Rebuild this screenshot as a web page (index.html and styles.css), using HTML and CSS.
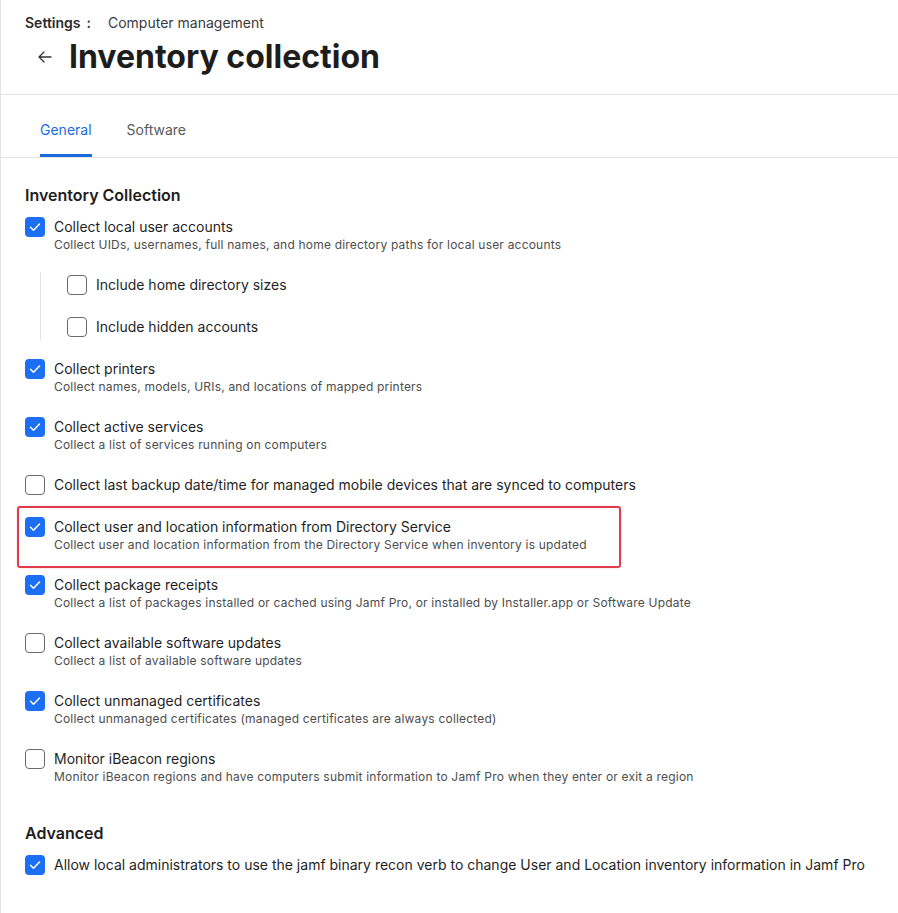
FILE: index.html
```html
<!DOCTYPE html>
<html lang="en">

<head>
  <meta charset="UTF-8">
  <meta name="viewport" content="width=device-width, initial-scale=1.0">
  <title>Inventory collection</title>
  <link rel="stylesheet" href="styles.css">
</head>

<body>
  <div class="page">
    <header class="page-header">
      <div class="breadcrumb">
        <span class="crumb-root">Settings</span>
        <span class="crumb-sep">:</span>
        <span class="crumb-current">Computer management</span>
      </div>
      <div class="title-row">
        <a class="back" href="#back" aria-label="Back">
          <svg width="16" height="16" viewBox="0 0 16 16" fill="none" stroke="#333" stroke-width="1.3" stroke-linecap="round" stroke-linejoin="round">
            <path d="M14 8H2M7 3L2 8l5 5" />
          </svg>
        </a>
        <h1>Inventory collection</h1>
      </div>
    </header>

    <nav class="tabs">
      <a class="tab active" href="#general">General</a>
      <a class="tab" href="#software">Software</a>
    </nav>

    <main class="content">
      <section class="group">
        <h2>Inventory Collection</h2>

        <div class="option">
          <span class="box checked"></span>
          <div class="text">
            <div class="label">Collect local user accounts</div>
            <div class="desc">Collect UIDs, usernames, full names, and home directory paths for local user accounts</div>
          </div>
        </div>

        <div class="nested">
          <div class="option">
            <span class="box"></span>
            <div class="text">
              <div class="label">Include home directory sizes</div>
            </div>
          </div>
          <div class="option">
            <span class="box"></span>
            <div class="text">
              <div class="label">Include hidden accounts</div>
            </div>
          </div>
        </div>

        <div class="option">
          <span class="box checked"></span>
          <div class="text">
            <div class="label">Collect printers</div>
            <div class="desc">Collect names, models, URIs, and locations of mapped printers</div>
          </div>
        </div>

        <div class="option">
          <span class="box checked"></span>
          <div class="text">
            <div class="label">Collect active services</div>
            <div class="desc">Collect a list of services running on computers</div>
          </div>
        </div>

        <div class="option">
          <span class="box"></span>
          <div class="text">
            <div class="label">Collect last backup date/time for managed mobile devices that are synced to computers</div>
          </div>
        </div>

        <div class="option highlighted">
          <span class="box checked"></span>
          <div class="text">
            <div class="label">Collect user and location information from Directory Service</div>
            <div class="desc">Collect user and location information from the Directory Service when inventory is updated</div>
          </div>
        </div>

        <div class="option">
          <span class="box checked"></span>
          <div class="text">
            <div class="label">Collect package receipts</div>
            <div class="desc">Collect a list of packages installed or cached using Jamf Pro, or installed by Installer.app or Software Update</div>
          </div>
        </div>

        <div class="option">
          <span class="box"></span>
          <div class="text">
            <div class="label">Collect available software updates</div>
            <div class="desc">Collect a list of available software updates</div>
          </div>
        </div>

        <div class="option">
          <span class="box checked"></span>
          <div class="text">
            <div class="label">Collect unmanaged certificates</div>
            <div class="desc">Collect unmanaged certificates (managed certificates are always collected)</div>
          </div>
        </div>

        <div class="option">
          <span class="box"></span>
          <div class="text">
            <div class="label">Monitor iBeacon regions</div>
            <div class="desc">Monitor iBeacon regions and have computers submit information to Jamf Pro when they enter or exit a region</div>
          </div>
        </div>
      </section>

      <section class="group advanced">
        <h2>Advanced</h2>
        <div class="option">
          <span class="box checked"></span>
          <div class="text">
            <div class="label">Allow local administrators to use the jamf binary recon verb to change User and Location inventory information in Jamf Pro</div>
          </div>
        </div>
      </section>
    </main>
  </div>
</body>

</html>
```

FILE: styles.css
```css
* {
  margin: 0;
  padding: 0;
  box-sizing: border-box;
}

body {
  font-family: Inter, "Noto Sans", Arial, sans-serif;
  color: #1f1f1f;
  background: #fff;
}

.page {
  min-height: 913px;
  border-left: 1px solid #e2e2e2;
}

/* header */
.page-header {
  padding: 13px 24px 17px;
  border-bottom: 1px solid #e4e4e4;
}

.breadcrumb {
  display: flex;
  align-items: center;
  font-size: 14px;
  line-height: 20px;
  color: #3a3a3a;
}

.crumb-root {
  font-weight: 600;
  color: #2b2b2b;
}

.crumb-sep {
  margin: 0 17px 0 6px;
  font-weight: 600;
}

.title-row {
  display: flex;
  align-items: center;
  margin-top: 4px;
  height: 40px;
}

.back {
  display: flex;
  width: 16px;
  margin-left: 12px;
  margin-right: 16px;
}

h1 {
  font-size: 32px;
  line-height: 40px;
  font-weight: 700;
  color: #1d1d1d;
}

/* tabs */
.tabs {
  display: flex;
  gap: 35px;
  padding-left: 39px;
  border-bottom: 1px solid #e4e4e4;
}

.tab {
  display: block;
  padding: 25px 0 14px;
  font-size: 14px;
  line-height: 20px;
  color: #5a5a5a;
  text-decoration: none;
  border-bottom: 3px solid transparent;
}

.tab.active {
  color: #1b6bdf;
  border-bottom-color: #1b6bdf;
}

/* content */
.content {
  padding: 25px 24px 24px;
}

.group {
  display: flex;
  flex-direction: column;
  gap: 22px;
}

.group h2 {
  font-size: 16px;
  line-height: 24px;
  font-weight: 600;
  color: #1d1d1d;
  margin-bottom: -12px;
}

.advanced {
  margin-top: 36px;
}

.option {
  display: flex;
  align-items: flex-start;
  gap: 9px;
}

.box {
  flex: none;
  width: 20px;
  height: 20px;
  border: 1.5px solid #6a6a6a;
  border-radius: 4px;
  background: #fff;
}

.box.checked {
  border: none;
  background: #1c6ef2 url("data:image/svg+xml,%3Csvg xmlns='http://www.w3.org/2000/svg' width='20' height='20' viewBox='0 0 20 20'%3E%3Cpath d='M5.5 10.3l3 3 6-6.3' fill='none' stroke='white' stroke-width='1.5' stroke-linecap='round' stroke-linejoin='round'/%3E%3C/svg%3E") center / 20px 20px no-repeat;
}

.label {
  font-size: 14px;
  line-height: 20px;
  color: #1f1f1f;
}

.desc {
  font-size: 12px;
  line-height: 16px;
  color: #4d4d4d;
  letter-spacing: 0.2px;
}

.nested {
  display: flex;
  flex-direction: column;
  gap: 22px;
  margin: -3px 0 -3px 15px;
  padding: 3px 0 3px 26px;
  border-left: 1px solid #e2e2e2;
}

.highlighted {
  position: relative;
}

.highlighted::after {
  content: "";
  position: absolute;
  left: -8px;
  top: -11px;
  width: 600px;
  height: 58px;
  border: 2px solid #e23c4c;
  border-radius: 3px;
  box-shadow: 0 0 2px rgba(226, 60, 76, 0.3);
}
```
